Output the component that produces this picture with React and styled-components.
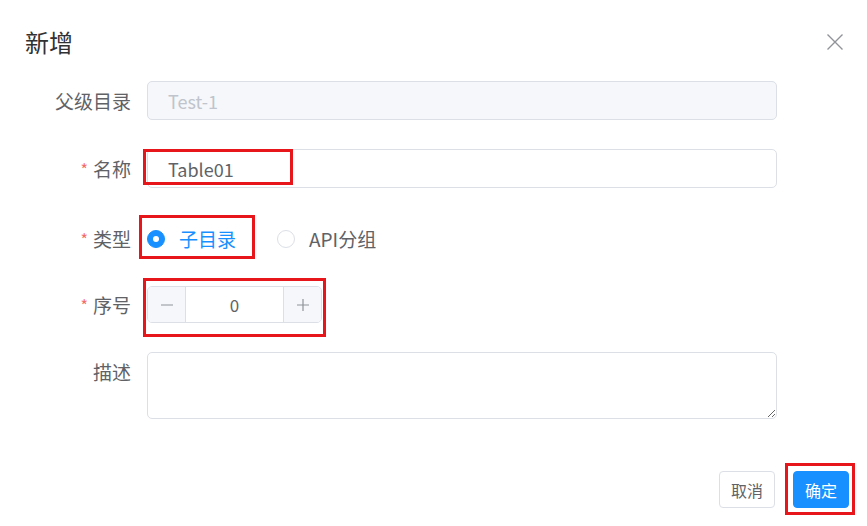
import React from "react";
import styled, { createGlobalStyle } from "styled-components";

const Global = createGlobalStyle`
  html, body { margin: 0; padding: 0; background: #fff; }
  body { font-family: "Noto Sans CJK SC", "Noto Sans", sans-serif; }
  * { box-sizing: border-box; }
`;

const Dialog = styled.div`
  width: 867px;
  height: 526px;
  background: #fff;
  display: flex;
  flex-direction: column;
`;

const Header = styled.div`
  display: flex;
  align-items: center;
  justify-content: space-between;
  height: 40px;
  margin-top: 22px;
  padding: 0 22px 0 25px;
`;

const Title = styled.div`
  font-size: 24px;
  color: #303133;
  line-height: 40px;
`;

const CloseBtn = styled.button`
  border: 0;
  background: none;
  padding: 0;
  width: 20px;
  height: 20px;
  display: flex;
  align-items: center;
  justify-content: center;
  cursor: pointer;
`;

const Form = styled.div`
  display: flex;
  flex-direction: column;
  margin-top: 19px;
  padding-right: 90px;
`;

const Row = styled.div`
  display: flex;
  align-items: ${(p) => (p.$top ? "flex-start" : "center")};
  min-height: 39px;
  margin-top: ${(p) => p.$mt || 0}px;
`;

const Label = styled.div`
  width: 131px;
  height: 39px;
  flex: none;
  text-align: right;
  font-size: 19px;
  color: #606266;
  line-height: 39px;
  margin-right: 16px;
  white-space: nowrap;
`;

const Star = styled.span`
  color: #f56c6c;
  font-size: 16px;
  line-height: 1;
  vertical-align: top;
  display: inline-block;
  margin-top: 12px;
  margin-right: 5px;
`;

const Field = styled.div`
  flex: 1;
  position: relative;
  display: flex;
  align-items: center;
`;

const Input = styled.div`
  flex: 1;
  height: 39px;
  border: 1px solid #dcdfe6;
  border-radius: 5px;
  background: ${(p) => (p.$disabled ? "#f5f7fa" : "#fff")};
  color: ${(p) => (p.$disabled ? "#c0c4cc" : "#606266")};
  font-size: 18px;
  padding-left: 20px;
  display: flex;
  align-items: center;
`;

const Mark = styled.div`
  position: absolute;
  border: 3px solid #e6161b;
  pointer-events: none;
`;

const RadioGroup = styled.div`
  display: flex;
  align-items: center;
  gap: 41px;
  height: 39px;
`;

const Radio = styled.div`
  display: flex;
  align-items: center;
  gap: 14px;
  font-size: 19px;
  color: ${(p) => (p.$checked ? "#1890ff" : "#606266")};
`;

const Dot = styled.span`
  width: 18px;
  height: 18px;
  border-radius: 50%;
  border: 1px solid ${(p) => (p.$checked ? "#1890ff" : "#dcdfe6")};
  background: ${(p) => (p.$checked ? "#1890ff" : "#fff")};
  display: flex;
  align-items: center;
  justify-content: center;
  &::after {
    content: "";
    width: 6px;
    height: 6px;
    border-radius: 50%;
    background: #fff;
    display: ${(p) => (p.$checked ? "block" : "none")};
  }
`;

const Stepper = styled.div`
  width: 175px;
  height: 37px;
  border: 1px solid #dcdfe6;
  border-radius: 5px;
  display: flex;
  overflow: hidden;
`;

const StepBtn = styled.div`
  width: 38px;
  flex: none;
  background: #f5f7fa;
  color: #909399;
  display: flex;
  align-items: center;
  justify-content: center;
  border-${(p) => p.$side}: 1px solid #dcdfe6;
`;

const StepValue = styled.div`
  flex: 1;
  display: flex;
  align-items: center;
  justify-content: center;
  font-size: 17px;
  color: #606266;
`;

const TextArea = styled.textarea`
  flex: 1;
  height: 67px;
  border: 1px solid #dcdfe6;
  border-radius: 5px;
  resize: vertical;
  font-family: inherit;
  font-size: 18px;
  outline: none;
  padding: 6px 20px;
`;

const Footer = styled.div`
  margin-top: auto;
  margin-bottom: 18px;
  padding-right: 18px;
  display: flex;
  justify-content: flex-end;
  gap: 18px;
`;

const Btn = styled.button`
  height: 37px;
  width: 56px;
  border-radius: 4px;
  font-family: inherit;
  font-size: 16px;
  border: 1px solid ${(p) => (p.$primary ? "#1890ff" : "#dcdfe6")};
  background: ${(p) => (p.$primary ? "#1890ff" : "#fff")};
  color: ${(p) => (p.$primary ? "#fff" : "#606266")};
  padding: 0;
`;

const BtnWrap = styled.div`
  position: relative;
  display: flex;
`;

const X = () => (
  <svg width="18" height="18" viewBox="0 0 18 18" fill="none" stroke="#909399" strokeWidth="1.4">
    <path d="M1.5 1.5 L16.5 16.5 M16.5 1.5 L1.5 16.5" />
  </svg>
);

const Minus = () => (
  <svg width="14" height="14" viewBox="0 0 14 14" stroke="#909399" strokeWidth="1.2">
    <path d="M1 7 H13" />
  </svg>
);

const Plus = () => (
  <svg width="14" height="14" viewBox="0 0 14 14" stroke="#909399" strokeWidth="1.2">
    <path d="M1 7 H13 M7 1 V13" />
  </svg>
);

export default function App() {
  return (
    <>
      <Global />
      <Dialog>
        <Header>
          <Title>新增</Title>
          <CloseBtn aria-label="close"><X /></CloseBtn>
        </Header>
        <Form>
          <Row>
            <Label>父级目录</Label>
            <Field>
              <Input $disabled>Test-1</Input>
            </Field>
          </Row>
          <Row $mt={29}>
            <Label><Star>*</Star>名称</Label>
            <Field>
              <Input>Table01</Input>
              <Mark style={{ left: -4, top: 0, width: 150, height: 36 }} />
            </Field>
          </Row>
          <Row $mt={31}>
            <Label><Star>*</Star>类型</Label>
            <Field>
              <RadioGroup>
                <Radio $checked><Dot $checked />子目录</Radio>
                <Radio><Dot />API分组</Radio>
              </RadioGroup>
              <Mark style={{ left: -8, top: -4, width: 116, height: 44 }} />
            </Field>
          </Row>
          <Row $mt={27}>
            <Label><Star>*</Star>序号</Label>
            <Field>
              <Stepper>
                <StepBtn $side="right"><Minus /></StepBtn>
                <StepValue>0</StepValue>
                <StepBtn $side="left"><Plus /></StepBtn>
              </Stepper>
              <Mark style={{ left: -4, top: -8, width: 183, height: 59 }} />
            </Field>
          </Row>
          <Row $top $mt={28}>
            <Label>描述</Label>
            <Field>
              <TextArea />
            </Field>
          </Row>
        </Form>
        <Footer>
          <Btn>取消</Btn>
          <BtnWrap>
            <Btn $primary>确定</Btn>
            <Mark style={{ left: -8, top: -8, width: 70, height: 52 }} />
          </BtnWrap>
        </Footer>
      </Dialog>
    </>
  );
}
